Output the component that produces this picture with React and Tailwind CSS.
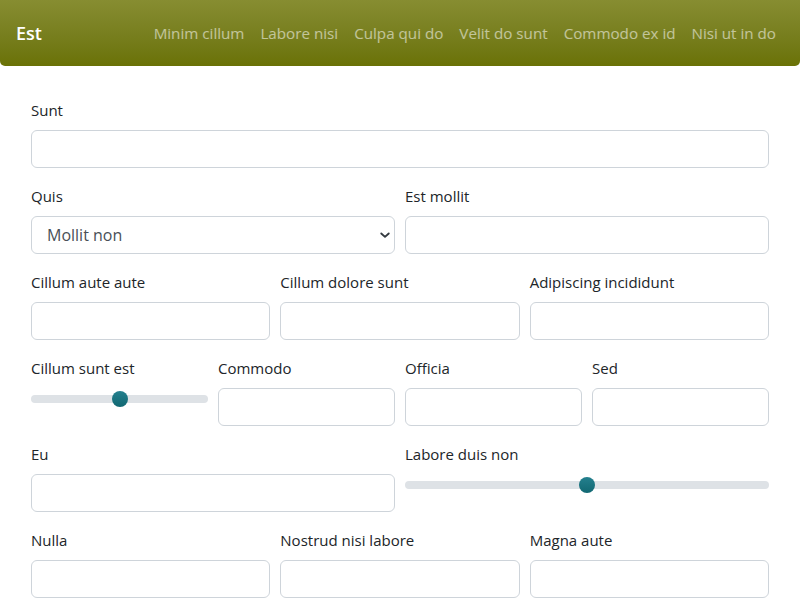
import React from "react";

const font = { fontFamily: "'Segoe UI', 'Open Sans', sans-serif" };

function Label({ children }) {
  return <label className="block text-[15px] leading-6 text-[#212529] mb-[8px]">{children}</label>;
}

function Input() {
  return <input className="block w-full h-[38px] rounded-[6px] border border-[#ced4da] bg-white" />;
}

function Field({ label }) {
  return (
    <div className="min-w-0">
      <Label>{label}</Label>
      <Input />
    </div>
  );
}

function Range({ label }) {
  return (
    <div className="min-w-0">
      <Label>{label}</Label>
      <div className="relative h-[24px]">
        <div className="absolute left-0 right-0 top-[7px] h-[8px] rounded-full bg-[#dee2e6]" />
        <div className="absolute top-[3px] left-1/2 -ml-[8px] w-4 h-4 rounded-full bg-gradient-to-b from-[#24808e] to-[#116872]" />
      </div>
    </div>
  );
}

export default function App() {
  const links = ["Minim cillum", "Labore nisi", "Culpa qui do", "Velit do sunt", "Commodo ex id", "Nisi ut in do"];
  return (
    <div className="w-[800px] h-[600px] overflow-hidden bg-white" style={font}>
      <nav className="h-[66px] flex items-center justify-between pl-4 pr-4 rounded-b-[5px] bg-gradient-to-b from-[#878d31] to-[#6a7205]">
        <span className="text-[18px] font-semibold text-white">Est</span>
        <div className="flex items-center">
          {links.map((l) => (
            <span key={l} className="px-2 text-[15.2px] text-white/55">{l}</span>
          ))}
        </div>
      </nav>
      <main className="px-[31px] pt-[32px] flex flex-col gap-4">
        <Field label="Sunt" />
        <div className="grid grid-cols-2 gap-[10px]">
          <div className="min-w-0">
            <Label>Quis</Label>
            <div className="relative">
              <select className="block w-full h-[38px] rounded-[6px] border border-[#ced4da] bg-white pl-[15px] text-[16px] text-[#495057] appearance-none">
                <option>Mollit non</option>
              </select>
              <svg className="absolute right-[4px] top-[13px]" width="12" height="12" viewBox="0 0 16 16">
                <path d="M3 6l5 4.5 5-4.5" fill="none" stroke="#343a40" strokeWidth="2.5" strokeLinecap="round" strokeLinejoin="round" />
              </svg>
            </div>
          </div>
          <Field label="Est mollit" />
        </div>
        <div className="grid grid-cols-3 gap-[10px]">
          <Field label="Cillum aute aute" />
          <Field label="Cillum dolore sunt" />
          <Field label="Adipiscing incididunt" />
        </div>
        <div className="grid grid-cols-4 gap-[10px]">
          <Range label="Cillum sunt est" />
          <Field label="Commodo" />
          <Field label="Officia" />
          <Field label="Sed" />
        </div>
        <div className="grid grid-cols-2 gap-[10px]">
          <Field label="Eu" />
          <Range label="Labore duis non" />
        </div>
        <div className="grid grid-cols-3 gap-[10px]">
          <Field label="Nulla" />
          <Field label="Nostrud nisi labore" />
          <Field label="Magna aute" />
        </div>
      </main>
    </div>
  );
}
